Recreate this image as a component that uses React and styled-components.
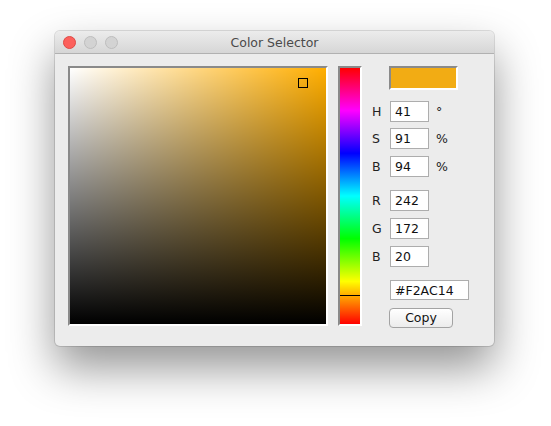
import React from "react";
import styled, { createGlobalStyle } from "styled-components";

const GlobalStyle = createGlobalStyle`
  html, body {
    margin: 0;
    padding: 0;
    background: #ffffff;
  }
  body {
    font-family: "DejaVu Sans", "Liberation Sans", sans-serif;
  }
`;

const Page = styled.div`
  padding: 31px 0 0 55px;
  height: 426px;
  box-sizing: border-box;
`;

const Window = styled.div`
  width: 439px;
  height: 315px;
  background: #ececec;
  border-radius: 5px;
  box-shadow: 0 22px 45px rgba(0, 0, 0, 0.42), 0 0 0 1px rgba(0, 0, 0, 0.12);
  display: flex;
  flex-direction: column;
  overflow: hidden;
`;

const TitleBar = styled.div`
  height: 22px;
  flex: none;
  border-bottom: 1px solid #b1b1b1;
  background: linear-gradient(to bottom, #ececec, #d6d6d6);
  display: flex;
  align-items: center;
  position: relative;
  padding-left: 8px;
  gap: 8px;
`;

const Light = styled.span`
  width: 11px;
  height: 11px;
  border-radius: 50%;
  background: ${(p) => (p.$red ? "#fc605c" : "#d3d3d3")};
  border: 0.5px solid ${(p) => (p.$red ? "#de4a45" : "#bdbdbd")};
`;

const Title = styled.div`
  position: absolute;
  left: 0;
  right: 0;
  text-align: center;
  font-size: 12.5px;
  color: #4a4a4a;
  pointer-events: none;
`;

const Body = styled.div`
  flex: 1;
  display: flex;
  padding: 12px 12px 0 13px;
`;

const SatBox = styled.div`
  position: relative;
  width: 256px;
  height: 256px;
  border: 2px solid;
  border-color: #8a8a8a #ffffff #ffffff #8a8a8a;
  background: linear-gradient(to top, #000, rgba(0, 0, 0, 0)),
    linear-gradient(to right, #fff, rgba(255, 255, 255, 0)), ${(p) => p.$hue};
`;

const Marker = styled.div`
  position: absolute;
  width: 8px;
  height: 8px;
  border: 1px solid #000;
  transform: translate(-5px, -5px);
`;

const HueBar = styled.div`
  position: relative;
  margin-left: 10px;
  width: 20px;
  height: 256px;
  border: 2px solid;
  border-color: #8a8a8a #ffffff #ffffff #8a8a8a;
  background: linear-gradient(
    to bottom,
    #ff0000 0%,
    #ff00ff 16.67%,
    #0000ff 33.33%,
    #00ffff 50%,
    #00ff00 66.67%,
    #ffff00 83.33%,
    #ff0000 100%
  );
`;

const HueLine = styled.div`
  position: absolute;
  left: 0;
  right: 0;
  height: 1px;
  background: #000;
`;

const Side = styled.div`
  margin-left: 10px;
  display: flex;
  flex-direction: column;
`;

const Swatch = styled.div`
  margin-left: 17px;
  width: 65px;
  height: 20px;
  border: 2px solid;
  border-color: #8a8a8a #ffffff #ffffff #8a8a8a;
  background: ${(p) => p.$color};
`;

const Fields = styled.div`
  display: grid;
  grid-template-columns: 18px 39px auto;
  grid-auto-rows: 21px;
  row-gap: 6.65px;
  align-items: center;
  margin-top: ${(p) => p.$top}px;
`;

const Label = styled.span`
  font-size: 12.5px;
  color: #222;
`;

const Unit = styled.span`
  font-size: 12.5px;
  color: #222;
  padding-left: 7px;
`;

const Field = styled.input`
  box-sizing: border-box;
  width: ${(p) => p.$w || 39}px;
  height: ${(p) => p.$h || 21}px;
  border: 1px solid #adadad;
  background: #fff;
  font-family: "DejaVu Sans", sans-serif;
  font-size: 12.5px;
  color: #111;
  padding: 0 0 0 4px;
  margin: 0;
  outline: none;
`;

const HexField = styled(Field)`
  margin: 13.7px 0 0 18px;
`;

const CopyButton = styled.button`
  margin: 7.6px 0 0 17px;
  width: 64px;
  height: 20px;
  border: 1px solid #a3a3a3;
  border-radius: 4px;
  background: linear-gradient(to bottom, #ffffff, #ececec);
  font-family: "DejaVu Sans", sans-serif;
  font-size: 12.5px;
  color: #111;
  padding: 0;
`;

const hsb = { h: 41, s: 91, b: 94 };
const rgb = { r: 242, g: 172, b: 20 };
const hex = "#F2AC14";

export default function App() {
  const markerX = (hsb.s / 100) * 256;
  const markerY = (1 - hsb.b / 100) * 256;
  const hueY = 256 - (hsb.h / 360) * 256;

  return (
    <Page>
      <GlobalStyle />
      <Window>
        <TitleBar>
          <Light $red />
          <Light />
          <Light />
          <Title>Color Selector</Title>
        </TitleBar>
        <Body>
          <SatBox $hue={`hsl(${hsb.h}, 100%, 50%)`}>
            <Marker style={{ left: markerX, top: markerY }} />
          </SatBox>
          <HueBar>
            <HueLine style={{ top: hueY }} />
          </HueBar>
          <Side>
            <Swatch $color={hex} />
            <Fields $top={10.7}>
              <Label>H</Label>
              <Field defaultValue={hsb.h} />
              <Unit>°</Unit>
              <Label>S</Label>
              <Field defaultValue={hsb.s} />
              <Unit>%</Unit>
              <Label>B</Label>
              <Field defaultValue={hsb.b} />
              <Unit>%</Unit>
            </Fields>
            <Fields $top={13.4}>
              <Label>R</Label>
              <Field defaultValue={rgb.r} />
              <span />
              <Label>G</Label>
              <Field defaultValue={rgb.g} />
              <span />
              <Label>B</Label>
              <Field defaultValue={rgb.b} />
              <span />
            </Fields>
            <HexField $w={79} $h={20} defaultValue={hex} />
            <div>
              <CopyButton>Copy</CopyButton>
            </div>
          </Side>
        </Body>
      </Window>
    </Page>
  );
}
